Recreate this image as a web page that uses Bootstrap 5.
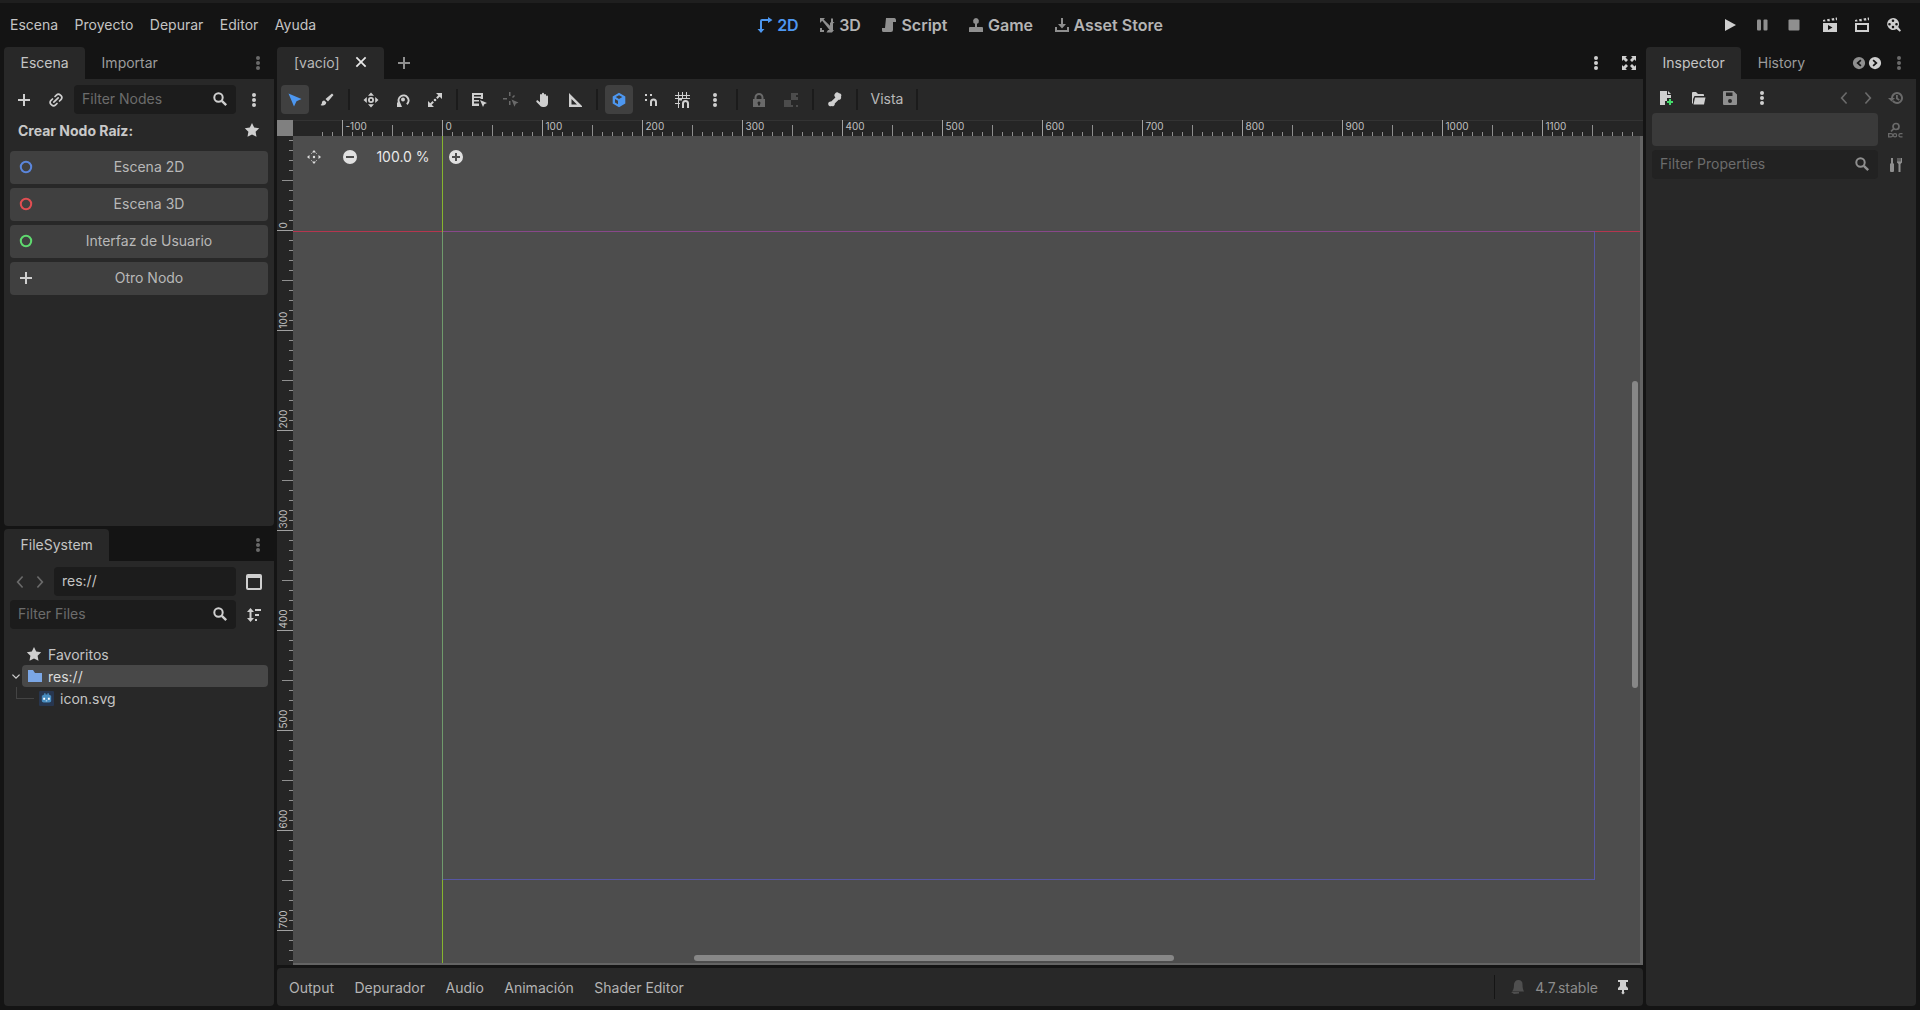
<!DOCTYPE html>
<html lang="es">
<head>
  <meta charset="UTF-8">
  <meta name="viewport" content="width=device-width, initial-scale=1.0">
  <title>Godot Engine</title>
  <link href="https://cdn.jsdelivr.net/npm/bootstrap@5.3.0/dist/css/bootstrap.min.css" rel="stylesheet">
  <style>
    body {
      background: #141414;
      color: #c4c4c4;
      font-family: Inter, "Liberation Sans", sans-serif;
      font-size: 14px;
      line-height: 17px;
      height: 1010px;
      overflow: hidden;
    }
    .top-strip { height: 3px; background: #1f1f1f; }
    .top-bar { height: 44px; display: grid; grid-template-columns: 1fr auto 1fr; align-items: center; }
    .menu-list { gap: 16.5px; padding-left: 10px; padding-bottom: 2px; }
    .screen-list { gap: 20.5px; font-size: 16px; font-weight: 600; color: #b4b4b4; }
    .screen-list > div { display: flex; align-items: center; gap: 4px; }
    .screen-list .on { color: #4d97f0; }
    .run-list { gap: 16px; padding-right: 18px; }
    .ic { width: 16px; height: 16px; flex: none; color: #cfcfcf; fill: currentColor; display: block; }
    .ic-dim { color: #6a6a6a; }
    .ic-mid { color: #8f8f8f; }
    .ic-blue { color: #4d97f0; }
    .ic-faint { color: #4c4c4c; }
    .ic-white { color: #e8e8e8; width: 14px; height: 14px; }
    .ic-small { width: 14px; height: 14px; }
    .work { gap: 3px; padding: 0 4px 4px; height: 963px; }
    .side-col { width: 270px; flex: none; gap: 3px; }
    .inspect-col { width: 270px; flex: none; }
    .mid-col { width: 1366px; flex: none; gap: 3px; }
    .tab-row { height: 32px; flex: none; }
    .dock-tab { height: 32px; padding: 0 16.5px 2px; display: flex; align-items: center; color: #9c9c9c; }
    .dock-tab.on { background: #282828; color: #c4c4c4; border-radius: 4px 4px 0 0; }
    .scene-tab { width: 107px; gap: 14px; padding-left: 17px; }
    .scene-tab.on { color: #b8b8b8; }
    .add-tab { margin-left: 12px; }
    .full-btn { margin: 0 6px 0 17px; }
    .dock-body { background: #282828; border-radius: 0 0 4px 4px; }
    .scene-dock { height: 447px; padding: 6px 6px 0; flex: none; }
    .fs-dock { padding: 6px 4px 0; }
    .tool-slot { width: 28px; height: 29px; display: flex; align-items: center; justify-content: center; flex: none; }
    .field {
      background: #1c1c1c;
      border: 0;
      border-radius: 4px;
      color: #c4c4c4;
      font-size: 14px;
      height: 29px;
      padding: 0 8px 2px;
      box-shadow: none;
    }
    .field:focus { background: #1c1c1c; color: #c4c4c4; box-shadow: none; }
    .field::placeholder { color: #6c6c6c; opacity: 1; }
    .field-wrap { position: relative; }
    .field-wrap .ic { position: absolute; right: 8px; top: 6px; }
    .w-nodes { width: 162px; margin-left: 4px; }
    .w-path { width: 182px; margin-left: 2px; }
    .w-files { width: 226px; margin-left: 2px; }
    .w-props { width: 226px; background: #222; }
    .w-props:focus { background: #222; }
    .root-title { font-weight: 700; color: #c8c8c8; padding: 6px 8px 12px; height: 36px; margin-top: 1px; }
    .node-btn {
      background: #404040;
      border: 0;
      border-radius: 4px;
      color: #b8b8b8;
      font-size: 14px;
      height: 33px;
      padding: 0 0 2px 8px;
      display: flex;
      align-items: center;
      width: 258px;
    }
    .node-btn span { flex: 1; text-align: center; padding-right: 4px; }
    .node-stack { gap: 4px; }
    .ring-2d { color: #5b86dc; }
    .ring-3d { color: #e04e52; }
    .ring-ui { color: #5fd96f; }
    .path-row { gap: 4px; padding-left: 4px; }
    .filter-row { margin-top: 4px; }
    .tree-box { margin-top: 14px; padding-right: 2px; }
    .tree-row { height: 22px; display: flex; align-items: center; }
    .tree-fav { padding-left: 18px; gap: 6px; }
    .tree-arrow { width: 10px; height: 10px; margin-left: 3px; }
    .tree-sel { background: #484848; border-radius: 4px; color: #dcdcdc; flex: 1; height: 22px; display: flex; align-items: center; padding-left: 5px; gap: 5px; margin-left: 1px; }
    .tree-file { padding-left: 8px; }
    .tree-line { width: 18px; height: 12px; border-left: 1px solid #444; border-bottom: 1px solid #444; align-self: flex-start; flex: none; }
    .file-ic { width: 15px; height: 15px; margin: 0 6px 0 5px; }
    .folder-ic { color: #7ba7e6; }
    .center-tool { height: 41px; background: #282828; padding: 6px 4px; gap: 4px; flex: none; }
    .center-tool .tool-slot.on { background: #404040; border-radius: 4px; }
    .tool-sep { width: 2px; height: 21px; background: #1b1b1b; margin: 0 3px; flex: none; }
    .tool-text { width: 44px; text-align: center; color: #b8b8b8; flex: none; padding-bottom: 2px; }
    .view-area { position: relative; flex-grow: 1; background: #4d4d4d; overflow: hidden; }
    .view-area svg.paint { position: absolute; left: 0; top: 0; }
    .zoom-box { position: absolute; left: 29px; top: 29px; height: 16px; color: #e8e8e8; padding-bottom: 1px; }
    .zoom-box .ic { color: #e0e0e0; }
    .zoom-minus { margin-left: 20px; }
    .zoom-label { width: 82px; text-align: center; margin: 0 4px; }
    .scroll-h { position: absolute; left: 417px; top: 835px; width: 480px; height: 6px; background: #878787; border-radius: 3px; }
    .scroll-v { position: absolute; left: 1355px; top: 261px; width: 6px; height: 307px; background: #878787; border-radius: 3px; }
    .bottom-bar { height: 38px; background: #282828; border-radius: 4px; padding: 0 12px; gap: 20.5px; color: #b4b4b4; flex: none; }
    .bar-sep { width: 1px; height: 24px; background: #151515; }
    .bell-ic { margin-left: -6.5px; color: #4f4f4f; }
    .ver-text { color: #8c8c8c; margin-left: -10.5px; }
    .pin-ic { margin-left: -3.5px; }
    .inspect-body { flex-grow: 1; padding: 4px 6px 0; }
    .inspect-tools { gap: 4px; }
    .hist-prev { margin-right: 4px; }
    .hist-next { margin-right: 8px; }
    .hist-ic { margin-right: 6px; }
    .circle-prev { margin-left: auto; }
    .circle-next { margin-left: 2px; }
    .dock-dots { margin: 0 9px; }
    .empty-row { margin-top: 1px; }
    .props-row { margin-top: 4px; }
    .empty-field { background: #3a3a3a; border-radius: 4px; height: 33px; width: 226px; }
    .doc-ic { margin-left: 9px; }
    .tools-ic { margin-left: 10px; }
  </style>
</head>
<body>
  <svg width="0" height="0" class="position-absolute">
    <defs>
      <symbol id="i-plus" viewBox="0 0 16 16"><path d="M7 2h2v5h5v2H9v5H7V9H2V7h5z"/></symbol>
      <symbol id="i-link" viewBox="0 0 16 16"><g fill="none" stroke="currentColor" stroke-width="1.7" stroke-linecap="round"><path d="M7 4.500l1.700-1.700a2.400 2.400 0 0 1 3.400 0l1.100 1.100a2.400 2.400 0 0 1 0 3.400L11.500 9"/><path d="M9 11.500l-1.700 1.700a2.400 2.400 0 0 1-3.400 0l-1.100-1.100a2.400 2.400 0 0 1 0-3.400L4.500 7"/><path d="M5.800 10.200l4.400-4.400"/></g></symbol>
      <symbol id="i-search" viewBox="0 0 16 16"><g fill="none" stroke="currentColor"><circle cx="6.500" cy="6.500" r="4.200" stroke-width="2"/><path d="M9.800 9.800l4.400 4.400" stroke-width="2.400"/></g></symbol>
      <symbol id="i-dots" viewBox="0 0 16 16"><circle cx="8" cy="3" r="2"/><circle cx="8" cy="8" r="2"/><circle cx="8" cy="13" r="2"/></symbol>
      <symbol id="i-star" viewBox="0 0 16 16"><path d="M8 1l2.200 4.600 5 .7-3.600 3.500.9 5L8 12.400 3.500 14.800l.9-5L.8 6.300l5-.7z"/></symbol>
      <symbol id="i-ring" viewBox="0 0 16 16"><circle cx="8" cy="8" r="5.200" fill="none" stroke="currentColor" stroke-width="2"/></symbol>
      <symbol id="i-close" viewBox="0 0 16 16"><path d="M3.400 2L8 6.600 12.600 2 14 3.400 9.400 8l4.600 4.600-1.400 1.400L8 9.400 3.400 14 2 12.600 6.600 8 2 3.400z"/></symbol>
      <symbol id="i-select" viewBox="0 0 16 16"><path d="M1.500 1.500l13 5.500-5 2.300L7 14.500z"/></symbol>
      <symbol id="i-brush" viewBox="0 0 16 16"><path d="M13 1.500l1.500 1.500-5.500 6.500-2.500-2.500zM5.300 8.500c-1.800 0-2.300 1.400-2.400 2.400-.1 1-.9 1.700-1.400 2 2 1 5.500.9 5.800-2.600z"/></symbol>
      <symbol id="i-move" viewBox="0 0 16 16"><path d="M8 .5L11 3.800H5zM8 15.500L5 12.200h6zM.5 8L3.800 5v6zM15.500 8L12.200 11V5z"/><path d="M8 5a3 3 0 1 1 0 6 3 3 0 0 1 0-6zm0 1.800a1.200 1.200 0 1 0 0 2.400 1.200 1.200 0 0 0 0-2.400z" fill-rule="evenodd"/></symbol>
      <symbol id="i-rotate" viewBox="0 0 16 16"><path d="M2 15v-5l1.300 1.300A6 6 0 1 1 12.500 13l-1.300-1.600A4 4 0 1 0 4.800 9.800L7 15z"/><circle cx="8" cy="7.500" r="2"/></symbol>
      <symbol id="i-scale" viewBox="0 0 16 16"><path d="M9 1h6v6l-2.300-2.300-2.200 2.200-1.400-1.400 2.200-2.200zM1 9l2.300 2.300 2.200-2.200 1.400 1.400-2.200 2.200L7 15H1z"/><circle cx="8" cy="8" r="1.300"/></symbol>
      <symbol id="i-list" viewBox="0 0 16 16"><path d="M1 1h11v6H9.500V6H3v2h5v1.500H3v2h5V14H1zM3 3v1.500h7V3z" fill-rule="evenodd"/><path d="M9 8l7 3-2.700 1.200L12 15z"/></symbol>
      <symbol id="i-pivot" viewBox="0 0 16 16"><path d="M6 0h1.500v4H6zM0 6h4v1.500H0zM6 9v4h1.500V9zM8.500 7.500l7 3-2.700 1.200-1.300 3z"/><path d="M9 5l2-2 1 1-2 2z"/></symbol>
      <symbol id="i-hand" viewBox="0 0 16 16"><path d="M5 3a1 1 0 0 1 2 0V1.800a1 1 0 0 1 2 0V3a1 1 0 0 1 2 0v1.500a1 1 0 0 1 2 0v6.500c0 2.500-1.800 4-4 4H8c-1.800 0-2.700-.8-3.500-2L1.500 10c-.8-1.200.8-2.300 1.700-1.300l1.800 1.500z"/></symbol>
      <symbol id="i-ruler" viewBox="0 0 16 16"><path d="M2 1l13 13v1H2zm2.500 6v5.500H10z" fill-rule="evenodd"/></symbol>
      <symbol id="i-cube" viewBox="0 0 16 16"><path d="M8 .8l6.300 3.600v7.200L8 15.200 1.700 11.600V4.400zM4.700 5l3.300 2 3.300-2L8 3.200zM7 8.700L4 7v3.500l3 1.800z" fill-rule="evenodd"/></symbol>
      <symbol id="i-snap" viewBox="0 0 16 16"><path d="M7 14v-4a3.500 3.500 0 0 1 7 0v4h-2v-4a1.500 1.500 0 0 0-3 0v4zM2 2h2v2H2zM7 2h2v2H7zM2 7h2v2H2z"/></symbol>
      <symbol id="i-grid" viewBox="0 0 16 16"><path d="M3 0h1v3h3V0h1v3h3V0h1v3h3v1h-3v2h3v1H7v1.500H4V11h1v1H4v4H3v-4H0v-1h3V7H0V6h3V4H0V3h3zm1 4v2h3V4zm4 0v2h3V4z" fill-rule="evenodd"/><path d="M7 16v-4.500a3.500 3.500 0 0 1 7 0V16h-2v-4.500a1.500 1.500 0 0 0-3 0V16z"/></symbol>
      <symbol id="i-lock" viewBox="0 0 16 16"><path d="M8 1a4.500 4.500 0 0 1 4.500 4.500V7H14v8H2V7h1.500V5.500A4.500 4.500 0 0 1 8 1zm0 2a2.500 2.500 0 0 0-2.500 2.500V7h5V5.500A2.500 2.500 0 0 0 8 3zm0 6.500a1.500 1.500 0 0 0-1 2.600V13.500h2v-1.400a1.500 1.500 0 0 0-1-2.600z" fill-rule="evenodd"/></symbol>
      <symbol id="i-group" viewBox="0 0 16 16"><path d="M1 8h7v7H1zM8 1h7v2h-2v2h2v3H8zM13 13h2v2h-2zM8 13h2v2H8z"/></symbol>
      <symbol id="i-bone" viewBox="0 0 16 16"><path d="M12 1.200a2.300 2.300 0 0 1 2 3.500 2.300 2.300 0 0 1-2.400 3.100L7.800 11.600a2.300 2.300 0 0 1-3.100 2.400 2.300 2.300 0 0 1-3.500-2 2.300 2.300 0 0 1 3-2.400L8.400 5.400A2.300 2.300 0 0 1 12 1.200z"/></symbol>
      <symbol id="i-2d" viewBox="0 0 16 16"><path d="M4 16L.5 12H3V4a2 2 0 0 1 2-2h6V0l4.500 3L11 6V4H5v8h2.500z"/></symbol>
      <symbol id="i-3d" viewBox="0 0 16 16"><path d="M1 1h5L4.600 2.400 11 8.800V6l1-1V1.500h2V5h1.500L14 6.500V13h1l-2 2.500H7.500L9 13h1.600L3.200 3.800 1 6zM1 11h2v2h2v2H1z"/></symbol>
      <symbol id="i-script" viewBox="0 0 16 16"><path d="M5 1h8.500A2 2 0 0 1 15 3v2h-3v8a2 2 0 0 1-2 2H2.500A1.500 1.500 0 0 1 1 13.500V11h3z"/></symbol>
      <symbol id="i-game" viewBox="0 0 16 16"><path d="M8 1a3 3 0 0 1 1 5.800V10h5a1 1 0 0 1 1 1v4H1v-4a1 1 0 0 1 1-1h5V6.800A3 3 0 0 1 8 1z"/></symbol>
      <symbol id="i-asset" viewBox="0 0 16 16"><path d="M7 1h2v6h3l-4 4.500L4 7h3zM1 10h2v3h10v-3h2v5H1z"/></symbol>
      <symbol id="i-play" viewBox="0 0 16 16"><path d="M3 2l11 6-11 6z"/></symbol>
      <symbol id="i-pause" viewBox="0 0 16 16"><rect x="3" y="2.500" width="4" height="11" rx="1"/><rect x="9.500" y="2.500" width="4" height="11" rx="1"/></symbol>
      <symbol id="i-stop" viewBox="0 0 16 16"><rect x="2.500" y="2.500" width="11" height="11" rx="1"/></symbol>
      <symbol id="i-movie" viewBox="0 0 16 16"><path d="M1 6h14v9H1zM6 8v5l4.500-2.500z" fill-rule="evenodd"/><path d="M1 3l2-.4.500 2H1zM5 2.200l2.500-.5.400 2.500H5.500zM9.500 1.400l2.500-.5.400 2.600H10zM13.500.7L15 .4v2.800h-1z"/></symbol>
      <symbol id="i-frame" viewBox="0 0 16 16"><path d="M1 6h14v9H1zM3 8v5h10V8z" fill-rule="evenodd"/><path d="M1 3l2-.4.500 2H1zM5 2.200l2.500-.5.400 2.500H5.500zM9.500 1.400l2.500-.5.400 2.600H10zM13.500.7L15 .4v2.800h-1z"/></symbol>
      <symbol id="i-reel" viewBox="0 0 16 16"><path d="M7 1a6 6 0 0 1 5.200 9l2.800 3.500-1.200 1.200L10.500 12A6 6 0 1 1 7 1zM7 2.500a1.300 1.300 0 1 0 0 2.600 1.300 1.300 0 0 0 0-2.600zM3.500 6a1.300 1.300 0 1 0 0 2.600 1.300 1.300 0 0 0 0-2.600zm7 0a1.300 1.300 0 1 0 0 2.600 1.300 1.300 0 0 0 0-2.600zM7 8.800a1.300 1.300 0 1 0 0 2.600 1.300 1.300 0 0 0 0-2.600z" fill-rule="evenodd"/></symbol>
      <symbol id="i-newdoc" viewBox="0 0 16 16"><path d="M2 1h7v4h4v3H9v3H7v4H2z"/><path d="M10 1l3 3h-3z"/><path d="M11 9h2v2h2v2h-2v2h-2v-2H9v-2h2z" fill="#45d96b"/></symbol>
      <symbol id="i-open" viewBox="0 0 16 16"><path d="M2 3a1 1 0 0 1 1-1h3l2 2h5a1 1 0 0 1 1 1v1H4.500L3 9V13L2 14zM3.500 14.500L5 7.500h10.500L14 14.500z"/></symbol>
      <symbol id="i-save" viewBox="0 0 16 16"><path d="M2 1h9.500L15 4.500V14a1 1 0 0 1-1 1H2a1 1 0 0 1-1-1V2a1 1 0 0 1 1-1zm2 1.500V6h6.500V2.500zM8 9a2 2 0 1 0 0 4 2 2 0 0 0 0-4z" fill-rule="evenodd"/></symbol>
      <symbol id="i-hist" viewBox="0 0 16 16"><path d="M9 2a6 6 0 1 1-5 9.300l1.700-1A4 4 0 1 0 5 8h2L3.500 11.500 0 8h3a6 6 0 0 1 6-6z"/><path d="M8 5h1.800v3l2 1.500-1 1.300L8 9z"/></symbol>
      <symbol id="i-doc" viewBox="0 0 16 16"><g fill="none" stroke="currentColor" stroke-width="1.700"><circle cx="9" cy="4.500" r="3"/><path d="M6.800 6.700L4 9.500"/></g><path d="M1 11h3a2 2 0 0 1 0 4.500H1zm1.300 1.200v2.100H4a1 1 0 0 0 0-2.100zM8 11a2.200 2.200 0 1 1 0 4.500A2.200 2.200 0 0 1 8 11zm0 1.200a1 1 0 1 0 0 2.100 1 1 0 0 0 0-2.100zM13.500 11h2v1.200h-2a1 1 0 0 0 0 2.100h2v1.200h-2a2.200 2.200 0 1 1 0-4.500z" fill-rule="evenodd"/></symbol>
      <symbol id="i-tools" viewBox="0 0 16 16"><path d="M3 1h2v5l1 1v7a1 1 0 0 1-1 1H3a1 1 0 0 1-1-1V7l1-1zM9.500 1v3.500h1V1h1v3.500h1V1H14v4.500L12.500 7v8h-2V7L9 5.500V1z"/></symbol>
      <symbol id="i-left" viewBox="0 0 16 16"><path d="M10 2l1.200 1L6.800 8l4.400 5-1.200 1L4.500 8z"/></symbol>
      <symbol id="i-right" viewBox="0 0 16 16"><path d="M6 2L4.800 3l4.400 5-4.400 5L6 14l5.500-6z"/></symbol>
      <symbol id="i-cleft" viewBox="0 0 16 16"><path d="M8 1a7 7 0 1 1 0 14A7 7 0 0 1 8 1zm1.500 3L5 8l4.500 4 1.300-1.500L8 8l2.800-2.500z" fill-rule="evenodd"/></symbol>
      <symbol id="i-cright" viewBox="0 0 16 16"><path d="M8 1a7 7 0 1 1 0 14A7 7 0 0 1 8 1zM6.500 4L5.200 5.500 8 8l-2.800 2.500L6.500 12 11 8z" fill-rule="evenodd"/></symbol>
      <symbol id="i-full" viewBox="0 0 16 16"><path d="M1 1h5L4.500 2.500 7 5 5 7 2.500 4.500 1 6zM15 1v5l-1.500-1.500L11 7 9 5l2.500-2.500L10 1zM1 15v-5l1.500 1.500L5 9l2 2-2.500 2.500L6 15zM15 15h-5l1.500-1.500L9 11l2-2 2.500 2.500L15 10z"/></symbol>
      <symbol id="i-window" viewBox="0 0 16 16"><path d="M2 0h12a2 2 0 0 1 2 2v12a2 2 0 0 1-2 2H2a2 2 0 0 1-2-2V2a2 2 0 0 1 2-2zm0 4v10h12V4z" fill-rule="evenodd"/></symbol>
      <symbol id="i-sort" viewBox="0 0 16 16"><path d="M4.500 1L8 5H5.500v6H8l-3.500 4L1 11h2.500V5H1zM9 2h6v2H9zM9 7h4v2H9zM9 12h2v2H9z"/></symbol>
      <symbol id="i-folder" viewBox="0 0 16 16"><path d="M1 2h5l2 3h7v9H1z"/></symbol>
      <symbol id="i-chev" viewBox="0 0 16 16"><path d="M3 5l5 5 5-5 1.400 1.400L8 12.800 1.600 6.400z"/></symbol>
      <symbol id="i-bell" viewBox="0 0 16 16"><path d="M9.500 1a4 4 0 0 1 4 4.500c0 3 .5 5 1.500 7H3c1-1 2-3 2-6.500A4.500 4.500 0 0 1 9.500 1zM2 13h8v1.500L5 15z"/></symbol>
      <symbol id="i-pin" viewBox="0 0 16 16"><path d="M3 1h10v2h-2v4l2 2v2H9v2.500h1L8 15.500 6 13.500h1V11H3V9l2-2V3H3z"/></symbol>
      <symbol id="i-center" viewBox="0 0 16 16"><path d="M8 1l2 2.500H6zM8 15l-2-2.500h4zM1 8l2.500-2v4zM15 8l-2.500 2V6z"/><path d="M5 3.700l1 1-1 .3zM11 3.700l-1 1 1 .3zM5 12.300l1-1-1-.3zM11 12.300l-1-1 1-.3z"/><circle cx="8" cy="8" r="1.200"/></symbol>
      <symbol id="i-cminus" viewBox="0 0 16 16"><path d="M8 1a7 7 0 1 1 0 14A7 7 0 0 1 8 1zM4 7v2h8V7z" fill-rule="evenodd"/></symbol>
      <symbol id="i-cplus" viewBox="0 0 16 16"><path d="M8 1a7 7 0 1 1 0 14A7 7 0 0 1 8 1zM7 4v3H4v2h3v3h2V9h3V7H9V4z" fill-rule="evenodd"/></symbol>
      <symbol id="i-godot" viewBox="0 0 16 16"><rect width="16" height="16" rx="1" fill="#27364f"/><path d="M5.500 2.500h1.500v1.200h2V2.500h1.500v1.200L13 5v5.500c0 1-1 1.800-2 1.800H5c-1 0-2-.8-2-1.800V5l2.500-1.300z" fill="#478cbf"/><path d="M4.500 7.200h2v2h-2zM9.500 7.200h2v2h-2zM7.200 10h1.600v1H7.200z" fill="#fff"/></symbol>
    </defs>
  </svg>

  <div class="top-strip"></div>
  <header class="top-bar">
    <div class="d-flex menu-list">
      <span>Escena</span><span>Proyecto</span><span>Depurar</span><span>Editor</span><span>Ayuda</span>
    </div>
    <div class="d-flex screen-list">
      <div class="on"><svg class="ic ic-blue"><use href="#i-2d"/></svg>2D</div>
      <div><svg class="ic ic-mid"><use href="#i-3d"/></svg>3D</div>
      <div><svg class="ic ic-mid"><use href="#i-script"/></svg>Script</div>
      <div><svg class="ic ic-mid"><use href="#i-game"/></svg>Game</div>
      <div><svg class="ic ic-mid"><use href="#i-asset"/></svg>Asset Store</div>
    </div>
    <div class="d-flex justify-content-end align-items-center run-list">
      <svg class="ic"><use href="#i-play"/></svg>
      <svg class="ic ic-mid"><use href="#i-pause"/></svg>
      <svg class="ic ic-mid"><use href="#i-stop"/></svg>
      <svg class="ic ms-1"><use href="#i-movie"/></svg>
      <svg class="ic"><use href="#i-frame"/></svg>
      <svg class="ic"><use href="#i-reel"/></svg>
    </div>
  </header>

  <div class="d-flex work">
    <!-- columna izquierda -->
    <div class="d-flex flex-column side-col">
      <div>
        <div class="d-flex align-items-center tab-row">
          <div class="dock-tab on">Escena</div>
          <div class="dock-tab">Importar</div>
          <svg class="ic ic-dim ms-auto me-2"><use href="#i-dots"/></svg>
        </div>
        <div class="dock-body scene-dock">
          <div class="d-flex align-items-center">
            <div class="tool-slot"><svg class="ic"><use href="#i-plus"/></svg></div>
            <div class="tool-slot ms-1"><svg class="ic"><use href="#i-link"/></svg></div>
            <div class="field-wrap">
              <input class="form-control field w-nodes" placeholder="Filter Nodes">
              <svg class="ic"><use href="#i-search"/></svg>
            </div>
            <div class="tool-slot ms-1"><svg class="ic"><use href="#i-dots"/></svg></div>
          </div>
          <div class="d-flex justify-content-between align-items-center root-title">
            <span>Crear Nodo Raíz:</span>
            <svg class="ic"><use href="#i-star"/></svg>
          </div>
          <div class="d-flex flex-column node-stack">
            <button class="btn node-btn"><svg class="ic ring-2d"><use href="#i-ring"/></svg><span>Escena 2D</span></button>
            <button class="btn node-btn"><svg class="ic ring-3d"><use href="#i-ring"/></svg><span>Escena 3D</span></button>
            <button class="btn node-btn"><svg class="ic ring-ui"><use href="#i-ring"/></svg><span>Interfaz de Usuario</span></button>
            <button class="btn node-btn"><svg class="ic"><use href="#i-plus"/></svg><span>Otro Nodo</span></button>
          </div>
        </div>
      </div>
      <div class="d-flex flex-column flex-grow-1">
        <div class="d-flex align-items-center tab-row">
          <div class="dock-tab on">FileSystem</div>
          <svg class="ic ic-dim ms-auto me-2"><use href="#i-dots"/></svg>
        </div>
        <div class="dock-body flex-grow-1 fs-dock">
          <div class="d-flex align-items-center path-row">
            <svg class="ic ic-dim"><use href="#i-left"/></svg>
            <svg class="ic ic-dim"><use href="#i-right"/></svg>
            <input class="form-control field w-path" value="res://">
            <div class="tool-slot"><svg class="ic"><use href="#i-window"/></svg></div>
          </div>
          <div class="d-flex align-items-center filter-row">
            <div class="field-wrap">
              <input class="form-control field w-files" placeholder="Filter Files">
              <svg class="ic"><use href="#i-search"/></svg>
            </div>
            <div class="tool-slot ms-1"><svg class="ic"><use href="#i-sort"/></svg></div>
          </div>
          <div class="tree-box">
            <div class="tree-row tree-fav"><svg class="ic"><use href="#i-star"/></svg>Favoritos</div>
            <div class="tree-row">
              <svg class="ic tree-arrow"><use href="#i-chev"/></svg>
              <div class="tree-sel"><svg class="ic folder-ic"><use href="#i-folder"/></svg><span>res://</span></div>
            </div>
            <div class="tree-row tree-file">
              <span class="tree-line"></span>
              <svg class="ic file-ic"><use href="#i-godot"/></svg>
              <span>icon.svg</span>
            </div>
          </div>
        </div>
      </div>
    </div>

    <!-- centro -->
    <div class="d-flex flex-column mid-col">
      <div class="flex-grow-1 d-flex flex-column">
        <div class="d-flex align-items-center tab-row">
          <div class="dock-tab on scene-tab">[vacío]<svg class="ic ic-white"><use href="#i-close"/></svg></div>
          <svg class="ic ic-mid add-tab"><use href="#i-plus"/></svg>
          <svg class="ic ms-auto"><use href="#i-dots"/></svg>
          <svg class="ic full-btn"><use href="#i-full"/></svg>
        </div>
        <div class="d-flex align-items-center center-tool">
          <div class="tool-slot on"><svg class="ic ic-blue"><use href="#i-select"/></svg></div>
          <div class="tool-slot"><svg class="ic"><use href="#i-brush"/></svg></div>
          <div class="tool-sep"></div>
          <div class="tool-slot"><svg class="ic"><use href="#i-move"/></svg></div>
          <div class="tool-slot"><svg class="ic"><use href="#i-rotate"/></svg></div>
          <div class="tool-slot"><svg class="ic"><use href="#i-scale"/></svg></div>
          <div class="tool-sep"></div>
          <div class="tool-slot"><svg class="ic"><use href="#i-list"/></svg></div>
          <div class="tool-slot"><svg class="ic ic-dim"><use href="#i-pivot"/></svg></div>
          <div class="tool-slot"><svg class="ic"><use href="#i-hand"/></svg></div>
          <div class="tool-slot"><svg class="ic"><use href="#i-ruler"/></svg></div>
          <div class="tool-sep"></div>
          <div class="tool-slot on"><svg class="ic ic-blue"><use href="#i-cube"/></svg></div>
          <div class="tool-slot"><svg class="ic"><use href="#i-snap"/></svg></div>
          <div class="tool-slot"><svg class="ic"><use href="#i-grid"/></svg></div>
          <div class="tool-slot"><svg class="ic"><use href="#i-dots"/></svg></div>
          <div class="tool-sep"></div>
          <div class="tool-slot"><svg class="ic ic-dim"><use href="#i-lock"/></svg></div>
          <div class="tool-slot"><svg class="ic ic-faint"><use href="#i-group"/></svg></div>
          <div class="tool-sep"></div>
          <div class="tool-slot"><svg class="ic"><use href="#i-bone"/></svg></div>
          <div class="tool-sep"></div>
          <div class="tool-text">Vista</div>
          <div class="tool-sep"></div>
        </div>
        <div class="view-area">
          <svg class="paint" id="viewPaint" width="1366" height="845" xmlns="http://www.w3.org/2000/svg"></svg>
          <div class="d-flex align-items-center zoom-box">
            <svg class="ic"><use href="#i-center"/></svg>
            <svg class="ic zoom-minus"><use href="#i-cminus"/></svg>
            <span class="zoom-label">100.0 %</span>
            <svg class="ic"><use href="#i-cplus"/></svg>
          </div>
          <div class="scroll-h"></div>
          <div class="scroll-v"></div>
        </div>
      </div>
      <div class="d-flex align-items-center bottom-bar">
        <span>Output</span><span>Depurador</span><span>Audio</span><span>Animación</span><span>Shader Editor</span>
        <div class="bar-sep ms-auto"></div>
        <svg class="ic bell-ic"><use href="#i-bell"/></svg>
        <span class="ver-text">4.7.stable</span>
        <svg class="ic pin-ic"><use href="#i-pin"/></svg>
      </div>
    </div>

    <!-- inspector -->
    <div class="d-flex flex-column inspect-col">
      <div class="d-flex align-items-center tab-row">
        <div class="dock-tab on">Inspector</div>
        <div class="dock-tab">History</div>
        <svg class="ic ic-mid ic-small circle-prev"><use href="#i-cleft"/></svg>
        <svg class="ic ic-small circle-next"><use href="#i-cright"/></svg>
        <svg class="ic ic-dim dock-dots"><use href="#i-dots"/></svg>
      </div>
      <div class="dock-body inspect-body">
        <div class="d-flex align-items-center inspect-tools">
          <div class="tool-slot"><svg class="ic"><use href="#i-newdoc"/></svg></div>
          <div class="tool-slot"><svg class="ic"><use href="#i-open"/></svg></div>
          <div class="tool-slot"><svg class="ic ic-mid"><use href="#i-save"/></svg></div>
          <div class="tool-slot"><svg class="ic"><use href="#i-dots"/></svg></div>
          <svg class="ic ic-dim ms-auto hist-prev"><use href="#i-left"/></svg>
          <svg class="ic ic-dim hist-next"><use href="#i-right"/></svg>
          <svg class="ic ic-dim hist-ic"><use href="#i-hist"/></svg>
        </div>
        <div class="d-flex align-items-center empty-row">
          <div class="empty-field"></div>
          <svg class="ic ic-dim doc-ic"><use href="#i-doc"/></svg>
        </div>
        <div class="d-flex align-items-center props-row">
          <div class="field-wrap">
            <input class="form-control field w-props" placeholder="Filter Properties">
            <svg class="ic ic-mid"><use href="#i-search"/></svg>
          </div>
          <svg class="ic ic-mid tools-ic"><use href="#i-tools"/></svg>
        </div>
      </div>
    </div>
  </div>

  <script>
    // reglas y ejes del viewport 2D
    const ox = 165, oy = 111, W = 1366, H = 845, rulerW = 16;
    let s = '';
    function line(x1, y1, x2, y2, color) {
      s += `<line x1="${x1}" y1="${y1}" x2="${x2}" y2="${y2}" stroke="${color}" stroke-width="1" shape-rendering="crispEdges"/>`;
    }

    // lineas de origen y rectangulo de la ventana (1152x648)
    const vx = ox + 0.5, vy = oy + 0.5, rx = ox + 1152.5, ry = oy + 648.5;
    line(rulerW, vy, vx, vy, '#b5364f');
    line(vx, vy, rx, vy, '#88488a');
    line(rx, vy, W, vy, '#b5364f');
    line(vx, 16, vx, vy, '#86b52e');
    line(vx, vy, vx, ry, '#6f9a6c');
    line(vx, ry, vx, H, '#86b52e');
    line(rx, vy, rx, ry, '#5656a4');
    line(vx, ry, rx, ry, '#5656a4');

    // borde del viewport
    s += `<rect x="${W - 3}" y="16" width="3" height="${H - 16}" fill="#646464"/>`;
    s += `<rect x="16" y="${H - 2}" width="${W - 16}" height="2" fill="#646464"/>`;

    // fondos de las reglas
    s += `<rect x="16" y="0" width="${W - 16}" height="16" fill="#252525"/>`;
    s += `<rect x="0" y="16" width="16" height="${H - 16}" fill="#252525"/>`;
    s += `<rect x="16" y="0" width="${W - 16}" height="1" fill="#333"/>`;
    s += `<rect x="0" y="0" width="16" height="16" fill="#808080"/>`;

    const tick = '#8f8f8f';
    for (let v = -120; ox + v < W - 3; v += 10) {
      const x = ox + v + 0.5;
      if (x < 16) continue;
      if (v % 100 === 0) {
        line(x, 0, x, 16, '#a0a0a0');
        s += `<text x="${x + 3}" y="10" font-size="10" fill="#c0c0c0" font-family="Inter, sans-serif">${v}</text>`;
      } else if (v % 50 === 0) {
        line(x, 5, x, 16, tick);
      } else {
        line(x, 12, x, 16, tick);
      }
    }
    for (let v = -110; v + oy < H; v += 10) {
      const y = oy + v - 0.5;
      if (y < 16) continue;
      if (v % 100 === 0) {
        line(0, y, 16, y, '#a0a0a0');
        s += `<text transform="translate(10 ${y - 2}) rotate(-90)" font-size="10" fill="#c0c0c0" font-family="Inter, sans-serif">${v}</text>`;
      } else if (v % 50 === 0) {
        line(5, y, 16, y, tick);
      } else {
        line(12, y, 16, y, tick);
      }
    }
    document.getElementById('viewPaint').innerHTML = s;
  </script>
  <script src="https://cdn.jsdelivr.net/npm/bootstrap@5.3.0/dist/js/bootstrap.bundle.min.js"></script>
</body>
</html>
